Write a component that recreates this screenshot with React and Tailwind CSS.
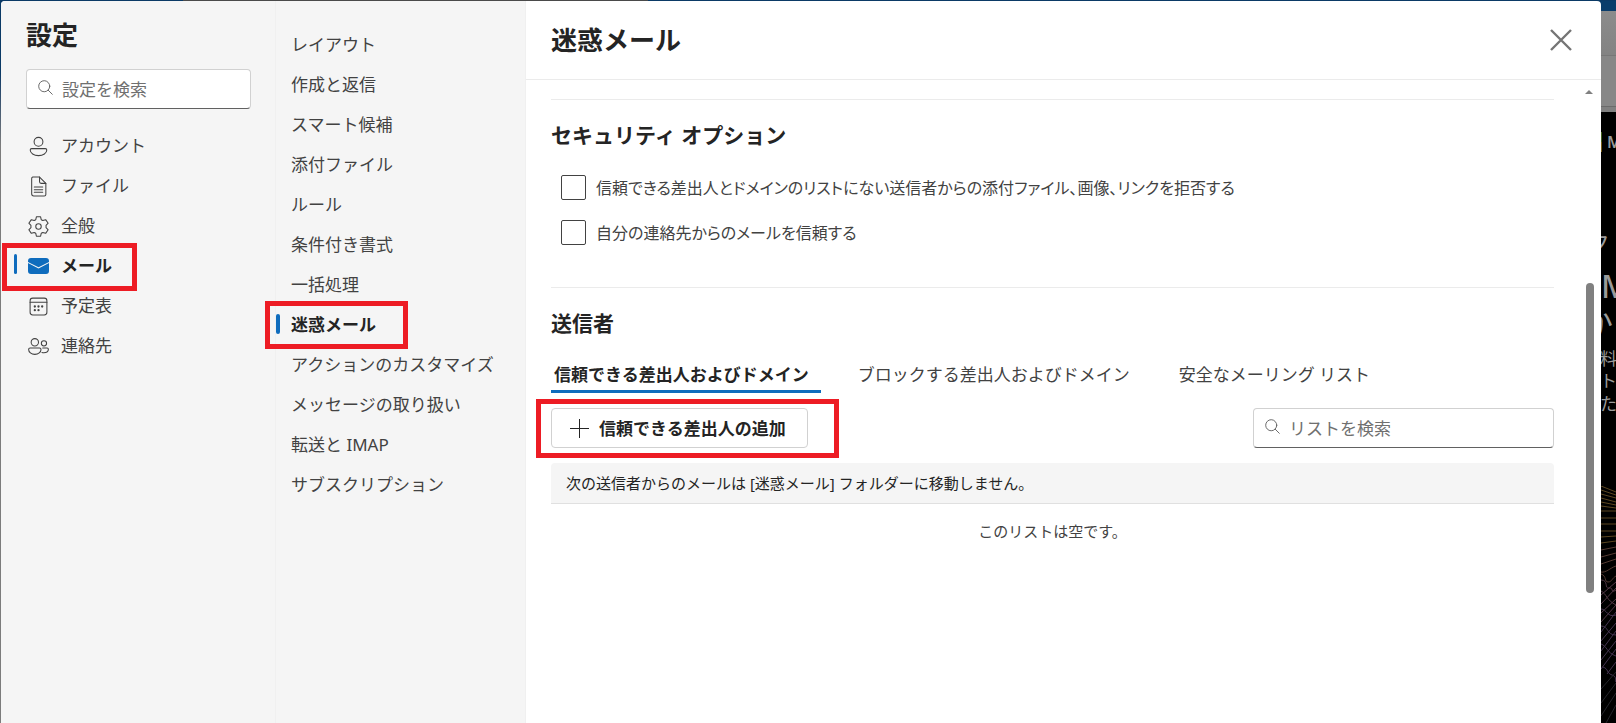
import React, { useState } from "react";

function Icon({ size = "size-[21px]", stroke = "1", children }) {
  return (
    <svg
      viewBox="0 0 20 20"
      fill="none"
      stroke="currentColor"
      strokeWidth={stroke}
      strokeLinecap="round"
      strokeLinejoin="round"
      className={`${size} shrink-0`}
      aria-hidden="true"
    >
      {children}
    </svg>
  );
}

const SearchIcon = () => (
  <Icon size="size-[17px] -mt-1" stroke="1.1">
    <circle cx="8.5" cy="8.5" r="6.5" />
    <path d="M13.2 13.2l4.8 4.8" />
  </Icon>
);

const icons = {
  account: (
    <Icon>
      <circle cx="10" cy="5.5" r="4.2" />
      <path d="M3.5 12h13c.8 0 1.4.6 1.4 1.4 0 3-3.500 5.300-7.900 5.300s-7.900-2.300-7.900-5.300c0-.8.6-1.400 1.400-1.400z" />
    </Icon>
  ),
  file: (
    <Icon>
      <path d="M4.500 1h6.500l6 6v10.500a1.500 1.500 0 0 1-1.500 1.500h-10a2 2 0 0 1-2-2v-14.500a1.500 1.500 0 0 1 1-1.500z" />
      <path d="M11 1v4.500a1.500 1.500 0 0 0 1.500 1.500h4.500M6 10.500h8M6 13h8M6 15.500h8" />
    </Icon>
  ),
  general: (
    <Icon>
      <circle cx="10" cy="10" r="2.600" />
      <path d="M8 .8h4l.6 2.700 1.500.8 2.700-.8 2.400 3.400-2 2v2.200l2 2-2.400 3.400-2.700-.8-1.500.8-.6 2.700h-4l-.6-2.700-1.500-.8-2.700.8-2.400-3.400 2-2V8.900l-2-2 2.400-3.400 2.700.8 1.500-.8z" />
    </Icon>
  ),
  mail: (
    <svg viewBox="0 0 21 16" className="w-[21px] h-[16px] shrink-0" aria-hidden="true">
      <path
        fill="#0f6cbd"
        d="M0 5l10 5.300a1 1 0 0 0 1 0L21 5v8a3 3 0 0 1-3 3H3a3 3 0 0 1-3-3zM3 0h15a3 3 0 0 1 3 3v.9L10.500 9.300 0 3.900V3a3 3 0 0 1 3-3z"
      />
    </svg>
  ),
  calendar: (
    <Icon>
      <rect x="2" y="2" width="16" height="16" rx="2.500" />
      <path d="M2 6h16" />
      <g fill="currentColor" stroke="none">
        <circle cx="6.500" cy="10" r="1.100" />
        <circle cx="10" cy="10" r="1.100" />
        <circle cx="13.500" cy="10" r="1.100" />
        <circle cx="6.500" cy="13.500" r="1.100" />
        <circle cx="10" cy="13.500" r="1.100" />
      </g>
    </Icon>
  ),
  people: (
    <Icon>
      <circle cx="6.500" cy="6" r="3.500" />
      <circle cx="15.200" cy="7" r="2.500" />
      <path d="M2 11.500h9c.8 0 1.400.6 1.400 1.400 0 2.500-2.500 4.600-5.900 4.600S.6 15.400.6 12.900c0-.8.6-1.400 1.400-1.400zM14 11.500h4.200c.7 0 1.200.5 1.200 1.200 0 2-2 3.300-4.400 3.300-.6 0-1.200-.1-1.700-.2" />
    </Icon>
  ),
};

const navItems = [
  { id: "account", label: "アカウント" },
  { id: "file", label: "ファイル" },
  { id: "general", label: "全般" },
  { id: "mail", label: "メール" },
  { id: "calendar", label: "予定表" },
  { id: "people", label: "連絡先" },
];

const mailItems = [
  "レイアウト",
  "作成と返信",
  "スマート候補",
  "添付ファイル",
  "ルール",
  "条件付き書式",
  "一括処理",
  "迷惑メール",
  "アクションのカスタマイズ",
  "メッセージの取り扱い",
  "転送と IMAP",
  "サブスクリプション",
];

const options = [
  "信頼できる差出人とドメインのリストにない送信者からの添付ファイル、画像、リンクを拒否する",
  "自分の連絡先からのメールを信頼する",
];

const tabs = ["信頼できる差出人およびドメイン", "ブロックする差出人およびドメイン", "安全なメーリング リスト"];

function SearchBox({ label, className }) {
  return (
    <label
      className={`flex h-10 items-center gap-2 rounded-[4px] border border-[#d1d1d1] border-b-[#616161] bg-white pl-[10px] text-[#616161] ${className}`}
    >
      <SearchIcon />
      <input
        type="search"
        aria-label={label}
        placeholder={label}
        className="min-w-0 flex-1 bg-transparent pt-0.5 text-[17px] outline-none placeholder:text-[#707070]"
      />
    </label>
  );
}

function Mark({ className }) {
  return (
    <span className={`pointer-events-none absolute z-10 border-[5px] border-[#ed1c24] ${className}`} />
  );
}

// sliver of the mailbox that stays visible behind the dialog
function Backdrop() {
  return (
    <div className="flex w-[15px] shrink-0 flex-col overflow-hidden whitespace-nowrap bg-black text-[#9a9a9a]">
      <div className="h-[10px] shrink-0 bg-[#0a3d6b]" />
      <div className="h-[45px] shrink-0 border-b border-[#777777] bg-linear-to-b from-[#8c8c8c] to-[#838383]" />
      <div className="h-[51px] shrink-0 border-b border-[#6b6b6b] bg-[#878787]" />
      <div className="h-[5px] shrink-0 bg-[#808080]" />
      <div className="relative min-h-0 flex-1">
        <span className="absolute left-0 top-5 h-5 w-px bg-linear-to-b from-[#42611c] from-50% to-[#7a5c14] to-50%" />
        <span className="absolute left-[6px] top-[18px] text-[16px] font-semibold">M</span>
        <span className="absolute -left-[15px] top-[119px] text-[24px]">ク</span>
        <span className="absolute left-0 top-[154px] text-[32px] font-medium leading-10">M</span>
        <span className="absolute -left-[20px] top-[191px] text-[32px] leading-10">か</span>
        <span className="absolute -left-px top-[235px] text-[17px]">料</span>
        <span className="absolute -left-px top-[257px] text-[17px]">ト</span>
        <span className="absolute -left-px top-[280px] text-[17px]">た</span>
        <svg viewBox="0 0 15 237" className="absolute left-0 top-[374px] h-[237px] w-[15px]" fill="none" aria-hidden="true">
          <g stroke="#5a4520">
            <path d="M0 0l15 6M0 4l15 5M0 8l15 4M0 12l15 4M0 16l15 3M0 20l15 2M0 25h15M0 32h15M0 38h15M0 45h15M0 51l15-1M0 57l15-2" />
          </g>
          <g stroke="#543a32">
            <path d="M0 64l15-3M0 71l15-4M0 78l15-5M0 86c5 1 9-4 15-6M0 88c6 2 3 8 7 8s4-4 8-6" />
          </g>
          <g stroke="#523846">
            <path d="M0 94c8 0 3 9 8 8s1 6 7 2M0 109l15-13M0 118l15-16M0 105c6 3 5 9 15 14M0 127l15-14M0 136l15-17" />
          </g>
          <g stroke="#43344f">
            <path d="M0 123c6 0 6 9 15 6M0 146l15-20M0 155l15-18M0 140c8 0 5 9 15 9M0 165l15-20M0 174l15-19M0 158c6 2 6 9 15 12M2 181c6 2 3 6 9 8s2 6 4 7M0 183l15-20M6 188l9-12" />
          </g>
          <g stroke="#25252b">
            <path d="M0 203l15-17M0 217l15-20M0 230l15-23M5 237l10-18" />
          </g>
        </svg>
      </div>
    </div>
  );
}

function App() {
  const [section, setSection] = useState("mail");
  const [page, setPage] = useState("迷惑メール");
  const [tab, setTab] = useState(tabs[0]);
  const [checked, setChecked] = useState({});

  return (
    <div className="flex h-screen flex-col overflow-hidden bg-[#0b3a66] font-['Noto_Sans','Noto_Sans_CJK_JP',sans-serif] text-[17px] leading-6 text-[#424242]">
      <div className="flex h-px shrink-0">
        <span className="w-[183px]" />
        <span className="w-[465px] bg-[#4a4a4a]" />
      </div>
      <div className="flex min-h-0 flex-1">
        <div className="w-px shrink-0 bg-linear-to-b from-[#0b3a66] from-10% via-[#7c7c7c] via-20% to-[#7c7c7c]" />
        <div className="flex min-w-0 flex-1 overflow-hidden rounded-t-[4px] bg-white">
          <aside className="w-[275px] shrink-0 border-r border-[#f0f0f0] bg-[#f5f5f5]">
            <h1 className="pl-[25px] pt-4 text-[26px] font-bold leading-9 text-[#242424]">設定</h1>
            <SearchBox label="設定を検索" className="mx-[25px] mt-4 w-[225px]" />
            <nav className="mt-[17px]">
              {navItems.map((item) => (
                <div key={item.id} className="relative">
                  <button
                    onClick={() => setSection(item.id)}
                    className={`flex h-10 w-full items-center gap-3 pl-[27px] text-left ${
                      section === item.id ? "font-bold text-[#242424]" : ""
                    }`}
                  >
                    {icons[item.id]}
                    {item.label}
                  </button>
                  {section === item.id && (
                    <span className="absolute left-[13px] top-2 h-5 w-[3px] rounded-full bg-[#0f6cbd]" />
                  )}
                  {item.id === "mail" && <Mark className="left-px -top-[3px] h-12 w-[135px]" />}
                </div>
              ))}
            </nav>
          </aside>

          <nav className="w-[250px] shrink-0 border-r border-[#f0f0f0] bg-[#f5f5f5] pt-6">
            {mailItems.map((item) => (
              <div key={item} className="relative">
                <button
                  onClick={() => setPage(item)}
                  className={`flex h-10 w-full items-center pl-[15px] text-left ${
                    page === item ? "font-bold text-[#242424]" : ""
                  }`}
                >
                  {item}
                </button>
                {page === item && (
                  <span className="absolute left-0 top-[9px] h-5 w-1 rounded-full bg-[#0f6cbd]" />
                )}
                {item === "迷惑メール" && <Mark className="-left-[11px] -top-[4px] h-12 w-[143px]" />}
              </div>
            ))}
          </nav>

          <main className="flex min-w-0 flex-1 flex-col">
            <header className="flex h-[79px] shrink-0 items-center justify-between border-b border-[#ebebeb] pl-[25px] pr-[29px]">
              <h2 className="text-[26px] font-bold leading-9 text-[#242424]">迷惑メール</h2>
              <button aria-label="閉じる" className="text-[#757575]">
                <svg viewBox="0 0 22 22" className="size-[22px]" fill="none" stroke="currentColor" strokeWidth="2.4">
                  <path d="M1 1l20 20M21 1L1 21" />
                </svg>
              </button>
            </header>

            <div className="relative min-h-0 flex-1 pl-[25px] pr-[47px] pt-[19px]">
              <section className="border-t border-[#ebebeb] pt-[19px]">
                <h3 className="text-[21px] font-bold leading-8 text-[#242424]">セキュリティ オプション</h3>
                <div className="pl-[10px] pt-[14px]">
                  {options.map((text) => (
                    <label key={text} className="flex h-[45px] items-center gap-[10px]">
                      <input
                        type="checkbox"
                        checked={!!checked[text]}
                        onChange={(e) => setChecked({ ...checked, [text]: e.target.checked })}
                        className="size-[25px] shrink-0 appearance-none rounded-[2px] border border-[#424242] checked:bg-[#0f6cbd]"
                      />
                      <span className="text-[16px] [font-feature-settings:'palt']">{text}</span>
                    </label>
                  ))}
                </div>
              </section>

              <section className="mt-8 border-t border-[#ebebeb] pt-[19px]">
                <h3 className="text-[21px] font-bold leading-8 text-[#242424]">送信者</h3>
                <div role="tablist" className="mt-4 flex gap-[34px]">
                  {tabs.map((t) => (
                    <button
                      key={t}
                      role="tab"
                      aria-selected={tab === t}
                      onClick={() => setTab(t)}
                      className={`flex h-[38px] items-center border-b-[3px] pl-[3px] pr-3 pt-[5px] ${
                        tab === t ? "border-[#0f6cbd] font-bold text-[#242424]" : "border-transparent"
                      }`}
                    >
                      {t}
                    </button>
                  ))}
                </div>

                <div className="mt-[15px] flex justify-between">
                  <div className="relative">
                    <button className="flex h-10 items-center gap-2 rounded-[4px] border border-[#d1d1d1] pl-[15px] pr-[21px] font-bold text-[#242424]">
                      <svg viewBox="0 0 24 24" className="size-6" fill="none" stroke="currentColor" strokeWidth="1">
                        <path d="M12.500 3v19M3 12.500h19" />
                      </svg>
                      <span className="pt-0.5">信頼できる差出人の追加</span>
                    </button>
                    <Mark className="-left-[15px] -top-[9px] h-[59px] w-[303px]" />
                  </div>
                  <SearchBox label="リストを検索" className="w-[301px]" />
                </div>

                <p className="mt-[15px] flex h-[41px] items-center rounded-t-[4px] border-b border-[#e0e0e0] bg-[#f5f5f5] pl-[15px] text-[15px] text-[#242424]">
                  次の送信者からのメールは [迷惑メール] フォルダーに移動しません。
                </p>
                <p className="pt-[15px] text-center text-[15px] text-[#424242]">このリストは空です。</p>
              </section>

              <svg viewBox="0 0 8 4" className="absolute right-[8px] top-[10px] h-1 w-2" fill="#808080" aria-hidden="true">
                <path d="M0 4l4-4 4 4z" />
              </svg>
              <span className="absolute right-[7px] top-[203px] h-[310px] w-2 rounded-full bg-[#808080]" />
            </div>
          </main>
        </div>
        <Backdrop />
      </div>
    </div>
  );
}

export default App;
